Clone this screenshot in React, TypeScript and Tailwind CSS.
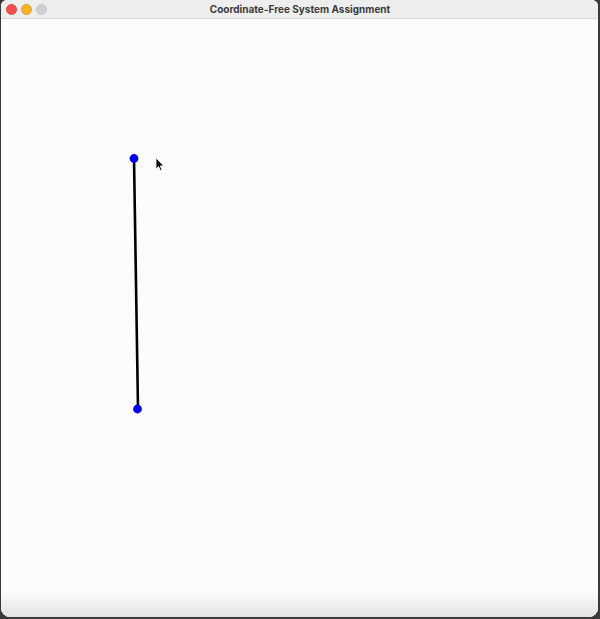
import React from "react";

export default function App() {
  return (
    <div className="w-[600px] h-[619px] bg-[#3a3a3a] flex flex-col overflow-hidden">
      <div className="flex-1 flex flex-col ml-[1px] mr-[2px] mb-[2px] rounded-b-[9px] rounded-t-[6px] overflow-hidden bg-[#fcfbfd]">
        <div
          className="relative h-[19px] shrink-0 bg-[#efeeef] border-b border-[#dcdbdc] flex items-center justify-center"
          style={{ fontFamily: '"Inter", "Liberation Sans", sans-serif' }}
        >
          <div className="absolute left-[5px] top-[4px] flex gap-[4px]">
            <span className="w-[11px] h-[11px] rounded-full bg-[#f4504f] border border-[#e0443f]" />
            <span className="w-[11px] h-[11px] rounded-full bg-[#f8b32b] border border-[#e0a020]" />
            <span className="w-[11px] h-[11px] rounded-full bg-[#d1d0d2] border border-[#c4c3c5]" />
          </div>
          <span className="text-[10px] font-bold text-[#3b3b3b] pl-[1px]">
            Coordinate-Free System Assignment
          </span>
        </div>
        <div className="relative flex-1 bg-[#fcfbfd]">
          <svg className="absolute left-0 top-0" width="597" height="597" viewBox="0 19 597 597">
            <line x1="133" y1="158" x2="137" y2="409" stroke="#000" strokeWidth="2.6" />
            <circle cx="133" cy="158.5" r="4.4" fill="#0000ee" />
            <circle cx="136.5" cy="409" r="4.4" fill="#0000ee" />
            <path
              d="M155 158 L155 169 L157.6 166.6 L159.4 170.6 L161 169.9 L159.3 166 L162.7 165.8 Z"
              fill="#000"
              stroke="#fff"
              strokeWidth="0.8"
              strokeLinejoin="round"
            />
          </svg>
          <div className="absolute left-0 right-0 bottom-0 h-[26px] bg-gradient-to-b from-[#fcfbfd] to-[#e4e3e4]" />
        </div>
      </div>
    </div>
  );
}
